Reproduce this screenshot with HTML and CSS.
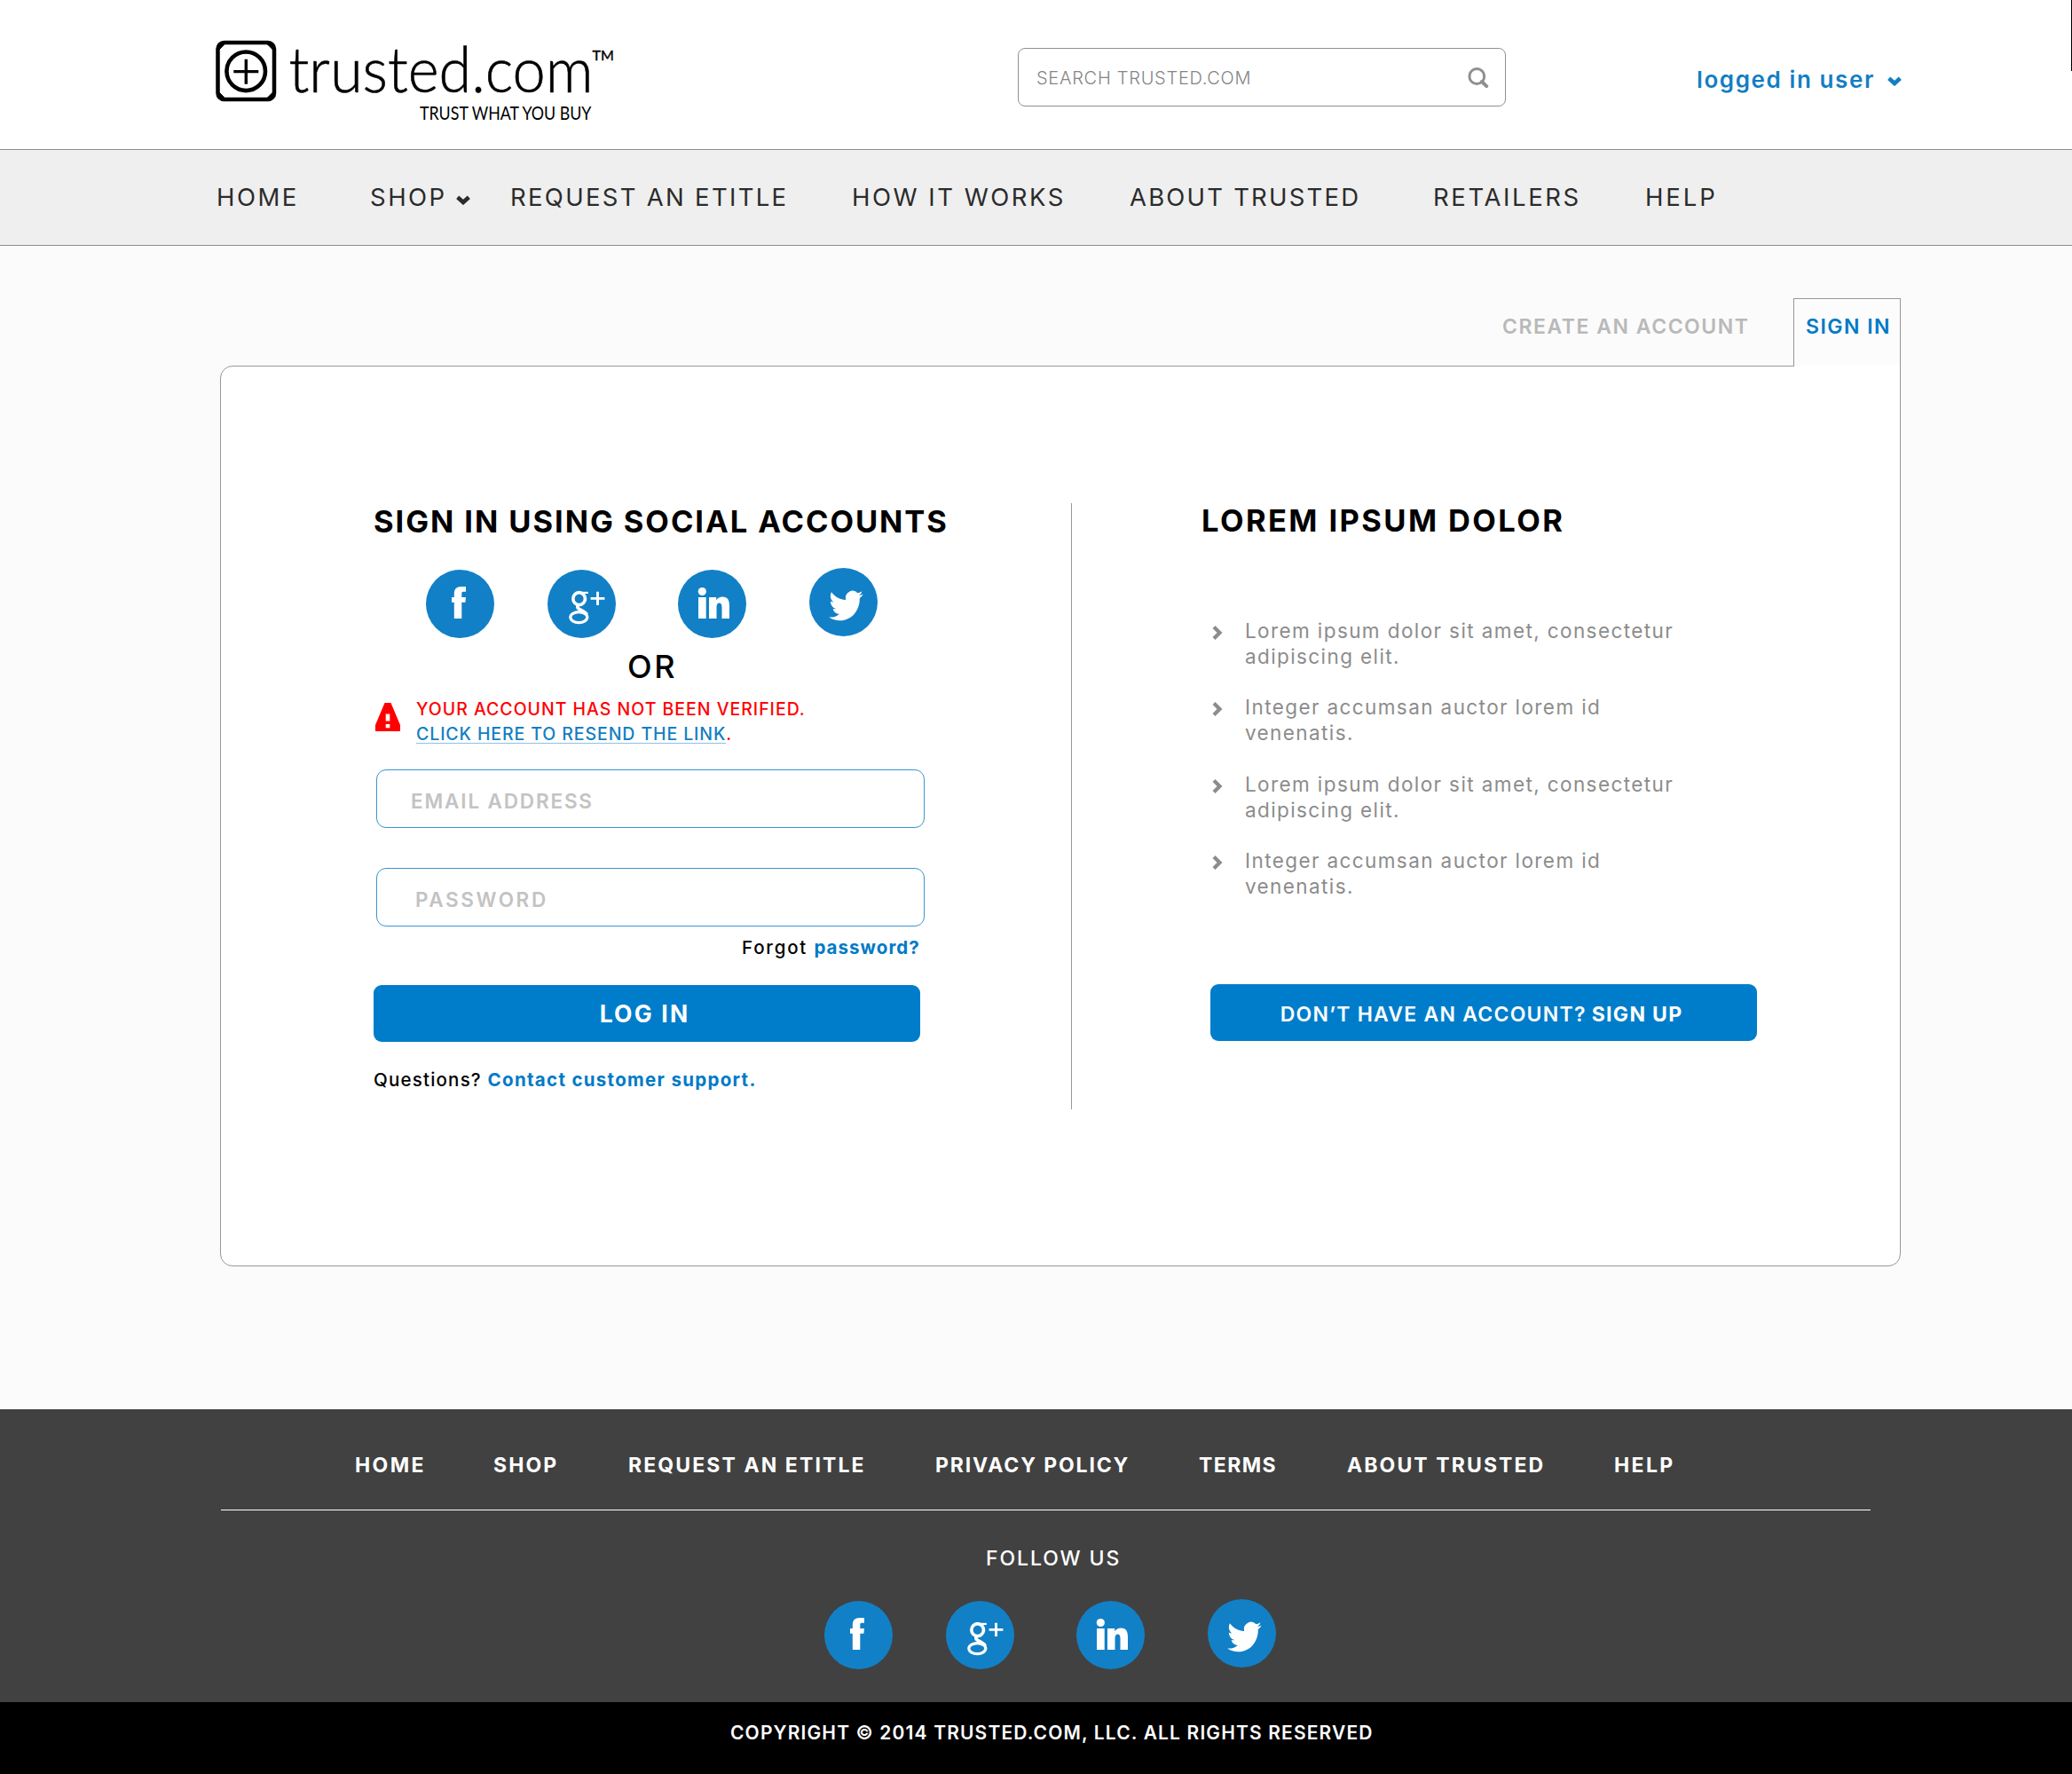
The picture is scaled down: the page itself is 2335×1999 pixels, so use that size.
FILE: index.html
```html
<!DOCTYPE html>
<html lang="en">
<head>
<meta charset="utf-8">
<title>Sign in – trusted.com</title>
<link rel="stylesheet" href="styles.css">
</head>
<body>
<svg class="sprite" aria-hidden="true">
  <symbol id="facebook" viewBox="0 0 77 77">
    <circle cx="38.5" cy="38.5" r="38.5" fill="#1280c6"/>
    <path fill="#fff" d="M31.8 55V36.7H29V31h2.8v-3.6c0-5.6 2.6-8.4 8-8.4H45v5.7h-2.9c-1.4 0-1.8.8-1.8 2.1V31H45l-.6 5.7h-4.1V55z"/>
  </symbol>
  <symbol id="googleplus" viewBox="0 0 77 77">
    <circle cx="38.5" cy="38.5" r="38.5" fill="#1280c6"/>
    <g fill="none" stroke="#fff">
      <ellipse cx="35.6" cy="32.6" rx="6.8" ry="7" stroke-width="3.6"/>
      <path d="M35.5 25.9h10.300" stroke-width="2.2"/>
      <path d="M40 27.5c3 2.500 3 5.500 2.600 7.500" stroke-width="2.8"/>
      <path d="M35 39.5c-2 2.500-1.500 3.800.800 4.900 3.500 1.600 6.800 2.600 8.600 6" stroke-width="3.6"/>
      <ellipse cx="35.3" cy="53.6" rx="9.5" ry="6" stroke-width="3.2"/>
      <path d="M48.6 32.4h15.800M56.500 24.800V40" stroke-width="2.9"/>
    </g>
  </symbol>
  <symbol id="linkedin" viewBox="0 0 77 77">
    <circle cx="38.5" cy="38.5" r="38.5" fill="#1280c6"/>
    <circle cx="27.3" cy="24.5" r="4.6" fill="#fff"/>
    <path fill="#fff" d="M23 31h8.700v24H23zM35 31h8.200v3.300c1.400-2.400 4-3.900 7-3.900 6 0 7.800 4 7.800 10V55h-8.500V42.400c0-3-.6-5-2.900-5-2.400 0-3.100 2-3.100 5V55H35z"/>
  </symbol>
  <symbol id="twitter" viewBox="0 0 77 77">
    <circle cx="38.5" cy="38.5" r="38.5" fill="#1280c6"/>
    <path fill="#fff" transform="translate(22.3 21.8) scale(1.6 1.72)" d="M23.953 4.570a10 10 0 01-2.825.775 4.958 4.958 0 002.163-2.723c-.951.555-2.005.959-3.127 1.184a4.920 4.920 0 00-8.384 4.482C7.690 8.095 4.067 6.130 1.640 3.162a4.822 4.822 0 00-.666 2.475c0 1.710.870 3.213 2.188 4.096a4.904 4.904 0 01-2.228-.616v.060a4.923 4.923 0 003.946 4.827 4.996 4.996 0 01-2.212.085 4.936 4.936 0 004.604 3.417 9.867 9.867 0 01-6.102 2.105c-.390 0-.779-.023-1.170-.067a13.995 13.995 0 007.557 2.209c9.053 0 13.998-7.496 13.998-13.985 0-.210 0-.420-.015-.630A9.935 9.935 0 0024 4.590z"/>
  </symbol>
  <symbol id="caret" viewBox="0 0 16 11">
    <path fill="none" stroke="currentColor" stroke-width="4.6" d="M1.7 2.200 8 8 14.300 2.200"/>
  </symbol>
  <symbol id="chevron" viewBox="0 0 12 16">
    <path fill="none" stroke="#8c8c8c" stroke-width="4.2" d="M2 1.500 8.500 8 2 14.500"/>
  </symbol>
</svg>

<header class="header">
  <svg class="logo" viewBox="0 0 460 100" role="img" aria-label="trusted.com">
    <rect x="3.5" y="8" width="63.5" height="64" rx="7" fill="none" stroke="#000" stroke-width="4.5"/>
    <path d="M5 16V10h6zM65.500 16V10h-6zM5 64v6h6zM65.500 64v6h-6z" stroke="#000" stroke-width="1"/>
    <circle cx="35.2" cy="40.3" r="21.8" fill="none" stroke="#000" stroke-width="4.6"/>
    <path d="M21.3 40.600h28M35.300 26.700v28" stroke="#000" stroke-width="3.4"/>
    <text class="logo-name" x="83.5" y="64" textLength="343" lengthAdjust="spacingAndGlyphs">trusted.com</text>
    <text class="logo-tm" x="425.5" y="28">TM</text>
    <text class="logo-tag" x="231" y="94.8" textLength="193.5" lengthAdjust="spacingAndGlyphs">TRUST WHAT YOU BUY</text>
  </svg>
  <div class="search">
    <span class="search-text">SEARCH TRUSTED.COM</span>
    <svg class="search-icon" viewBox="0 0 24 24"><circle cx="10.3" cy="10" r="8.4" fill="none" stroke="#8f8f8f" stroke-width="3"/><path d="m16 16 5.200 5.200" stroke="#8f8f8f" stroke-width="4" stroke-linecap="round"/></svg>
  </div>
  <a class="user">logged in user<svg class="caret"><use href="#caret"/></svg></a>
  <i class="edge"></i>
</header>

<nav class="nav">
  <a>HOME</a><a>SHOP<svg class="caret"><use href="#caret"/></svg></a><a>REQUEST AN ETITLE</a><a>HOW IT WORKS</a><a>ABOUT TRUSTED</a><a>RETAILERS</a><a>HELP</a>
</nav>

<main class="main">
  <div class="tabs">
    <a class="tab-idle">CREATE AN ACCOUNT</a>
    <a class="tab-active">SIGN IN</a>
  </div>
  <section class="panel">
    <div class="signin">
      <h2 class="title title-social">SIGN IN USING SOCIAL ACCOUNTS</h2>
      <div class="social">
        <svg><use href="#facebook"/></svg><svg><use href="#googleplus"/></svg><svg><use href="#linkedin"/></svg><svg><use href="#twitter"/></svg>
      </div>
      <p class="or">OR</p>
      <div class="alert">
        <svg class="alert-icon" viewBox="0 0 28 32"><path fill="#f00" d="M10.500 0h7L28 25v7H0v-7z"/><path fill="#fff" d="M11.700 12.500h4.600v8h-4.600zM11.700 24h4.600v4.200h-4.600z"/></svg>
        <p class="alert-text"><span class="alert-line">YOUR ACCOUNT HAS NOT BEEN VERIFIED.</span><br><a class="alert-link">CLICK HERE TO RESEND THE LINK</a>.</p>
      </div>
      <div class="field field-email">EMAIL ADDRESS</div>
      <div class="field field-password">PASSWORD</div>
      <p class="forgot">Forgot <a>password?</a></p>
      <a class="button login">LOG IN</a>
      <p class="questions">Questions? <a>Contact customer support.</a></p>
    </div>
    <div class="divider"></div>
    <div class="info">
      <h2 class="title title-info">LOREM IPSUM DOLOR</h2>
      <ul class="points">
        <li><svg class="chevron"><use href="#chevron"/></svg><span>Lorem ipsum dolor sit amet, consectetur<br>adipiscing elit.</span></li>
        <li><svg class="chevron"><use href="#chevron"/></svg><span>Integer accumsan auctor lorem id<br>venenatis.</span></li>
        <li><svg class="chevron"><use href="#chevron"/></svg><span>Lorem ipsum dolor sit amet, consectetur<br>adipiscing elit.</span></li>
        <li><svg class="chevron"><use href="#chevron"/></svg><span>Integer accumsan auctor lorem id<br>venenatis.</span></li>
      </ul>
      <a class="button signup">DON’T HAVE AN ACCOUNT? <b>SIGN UP</b></a>
    </div>
  </section>
</main>

<footer class="footer">
  <nav class="footer-nav">
    <a>HOME</a><a>SHOP</a><a>REQUEST AN ETITLE</a><a>PRIVACY POLICY</a><a>TERMS</a><a>ABOUT TRUSTED</a><a>HELP</a>
  </nav>
  <p class="follow">FOLLOW US</p>
  <div class="social social-footer">
    <svg><use href="#facebook"/></svg><svg><use href="#googleplus"/></svg><svg><use href="#linkedin"/></svg><svg><use href="#twitter"/></svg>
  </div>
</footer>
<div class="copyright">COPYRIGHT © 2014 TRUSTED.COM, LLC. ALL RIGHTS RESERVED</div>
</body>
</html>
```
FILE: styles.css
```css
* { box-sizing: border-box; margin: 0; padding: 0; }
body { width: 2335px; background: #fbfbfb; font-family: Inter, "Open Sans", sans-serif; color: #000; white-space: nowrap; overflow-x: hidden; }
svg { display: block; flex: none; }
.sprite { position: absolute; width: 0; height: 0; }

/* Header */
.header { position: relative; display: flex; height: 168px; padding-left: 242px; background: #fff; }
.logo { width: 460px; height: 100px; margin-top: 40px; overflow: visible; font-family: Lato, sans-serif; }
.logo-name { font-size: 70px; font-weight: 300; stroke: #000; stroke-width: .6px; }
.logo-tm { font-size: 16px; stroke: #000; stroke-width: .4px; }
.logo-tag { font-size: 22px; }
.search { display: flex; align-items: center; justify-content: space-between; width: 550px; height: 66px; margin: 54px 0 0 445px; padding: 0 18px 0 20px; background: #fff; border: 1px solid #909090; border-radius: 8px; }
.search-text { font-size: 20px; font-weight: 300; letter-spacing: .73px; line-height: 40px; color: #858585; padding-top: 2px; }
.search-icon { width: 24px; height: 24px; margin-top: 1px; }
.user { display: flex; align-items: center; height: 40px; margin: 69px 0 0 215px; font-size: 26px; font-weight: 600; letter-spacing: 1.6px; color: #127ec3; }
.user .caret { margin: 5px 0 0 14px; }
.caret { width: 16px; height: 11px; }
.edge { position: absolute; top: 0; right: 0; width: 1px; height: 80px; background: #000; }

/* Main navigation */
.nav { display: grid; grid-template-columns: 173px 158px 385px 313px 342px 239px auto; height: 109px; padding-left: 244px; background: #efefef; border: solid #8f8f8f; border-width: 1px 0; font-size: 27.5px; line-height: 107px; color: #2b2b2b; letter-spacing: 2.5px; }
.nav a { display: flex; align-items: center; }
.nav .caret { margin: 6px 0 0 10px; }
.nav a:nth-child(3) { letter-spacing: 2.3px; }
.nav a:nth-child(4) { letter-spacing: 2.5px; }
.nav a:nth-child(5) { letter-spacing: 2.2px; }
.nav a:nth-child(6) { letter-spacing: 2.6px; }
.nav a:nth-child(7) { letter-spacing: 2.9px; }

/* Tabs and panel */
.main { height: 1311px; padding: 59px 0 0 248px; }
.tabs { position: relative; display: flex; justify-content: flex-end; width: 1894px; height: 77px; font-size: 23px; line-height: 63px; }
.tab-idle { width: 328px; padding-top: 1px; font-weight: 600; letter-spacing: 1.53px; color: #b9b9b9; }
.tab-active { width: 121px; padding-left: 13px; background: linear-gradient(#fcfcfc 75px, #fff 75px); border: 1px solid #979797; border-bottom: 0; font-weight: 600; letter-spacing: 1.47px; color: #007ac6; }
.panel { display: flex; width: 1894px; height: 1015px; margin-top: -1px; padding: 154px 0 0 172px; background: #fff; border: 1px solid #979797; border-radius: 14px 0 14px 14px; }

.title { font-size: 34.5px; font-weight: 700; }
.title-social { line-height: 42px; letter-spacing: 1.94px; }
.title-info { line-height: 39px; letter-spacing: 2.4px; margin-left: -1px; }

.signin { width: 786px; }
.social { display: flex; padding-top: 2px; }
.social svg { width: 77px; height: 77px; }
.social svg:nth-child(2) { margin-left: 60px; }
.social svg:nth-child(3) { margin-left: 70px; }
.social svg:nth-child(4) { margin: -2px 0 0 71px; }
.signin .social { margin: 31px 0 0 59px; }
.or { margin: 12px 0 0 286px; font-size: 36px; font-weight: 500; line-height: 40px; letter-spacing: 2.6px; }
.alert { display: flex; margin-top: 14px; font-size: 19.5px; font-weight: 500; line-height: 28px; letter-spacing: .9px; color: #f00; }
.alert-icon { width: 28px; height: 32px; margin: 7px 18px 0 2px; }
.alert-line { letter-spacing: .98px; }
.alert-link { color: #127ec3; text-decoration: underline #8fc0e2 1px; text-underline-offset: 3px; text-decoration-skip-ink: none; }
.field { width: 618px; height: 66px; margin-left: 3px; border: 1px solid #3b94cf; border-radius: 11px; font-size: 22.5px; font-weight: 600; color: #c3c3c3; }
.field-email { margin-top: 26px; padding-left: 38px; line-height: 70px; letter-spacing: 1.85px; }
.field-password { margin-top: 45px; padding-left: 43px; line-height: 69px; letter-spacing: 2.6px; }
.forgot { margin: 11px 0 0 415px; font-size: 20.5px; font-weight: 500; line-height: 25px; letter-spacing: 1.8px; }
.forgot a, .questions a { font-weight: 700; color: #007ac6; }
.forgot a { letter-spacing: 1.05px; }
.button { display: block; width: 616px; background: #007dca; border-radius: 9px; color: #fff; text-align: center; }
.login { height: 64px; margin-top: 30px; font-size: 26.5px; font-weight: 700; line-height: 65px; letter-spacing: 2.2px; text-indent: -5px; }
.questions { margin-top: 29px; font-size: 20.5px; font-weight: 500; line-height: 27px; letter-spacing: 1.2px; }
.questions a { letter-spacing: 1.3px; }
.divider { width: 1px; height: 683px; background: #979797; }

.info { padding-left: 147px; }
.points { list-style: none; margin: 90px 0 0 11px; display: grid; row-gap: 28.4px; font-size: 22.5px; line-height: 29px; letter-spacing: 1.4px; color: #8c8c8c; }
.points li { display: flex; gap: 25px; }
.chevron { width: 12px; height: 16px; margin-top: 9px; }
.signup { height: 64px; margin: 96px 0 0 9px; font-size: 23px; font-weight: 600; line-height: 68px; letter-spacing: 1.25px; text-indent: -5px; }
.signup b { font-weight: 700; letter-spacing: 1.3px; margin-left: -1px; }

/* Footer */
.footer { height: 330px; padding-left: 249px; background: #414141; color: #fff; font-size: 23px; }
.footer-nav { display: grid; grid-template-columns: 156px 152px 346px 297px 167px 301px auto; width: 1859px; height: 114px; padding: 51px 0 0 151px; border-bottom: 1px solid #fff; font-weight: 700; line-height: 25px; letter-spacing: 2.1px; }
.footer-nav a:nth-child(1), .footer-nav a:nth-child(7) { letter-spacing: 2.4px; }
.footer-nav a:nth-child(4) { letter-spacing: 1.86px; }
.footer-nav a:nth-child(5) { letter-spacing: 1.41px; }
.follow { margin: 42px 0 0 862px; font-weight: 500; line-height: 25px; letter-spacing: 1.91px; }
.social-footer { margin: 33px 0 0 680px; }
.copyright { height: 81px; padding-left: 823px; background: #000; color: #fff; font-size: 21px; font-weight: 600; line-height: 70px; letter-spacing: 1.14px; }
```
